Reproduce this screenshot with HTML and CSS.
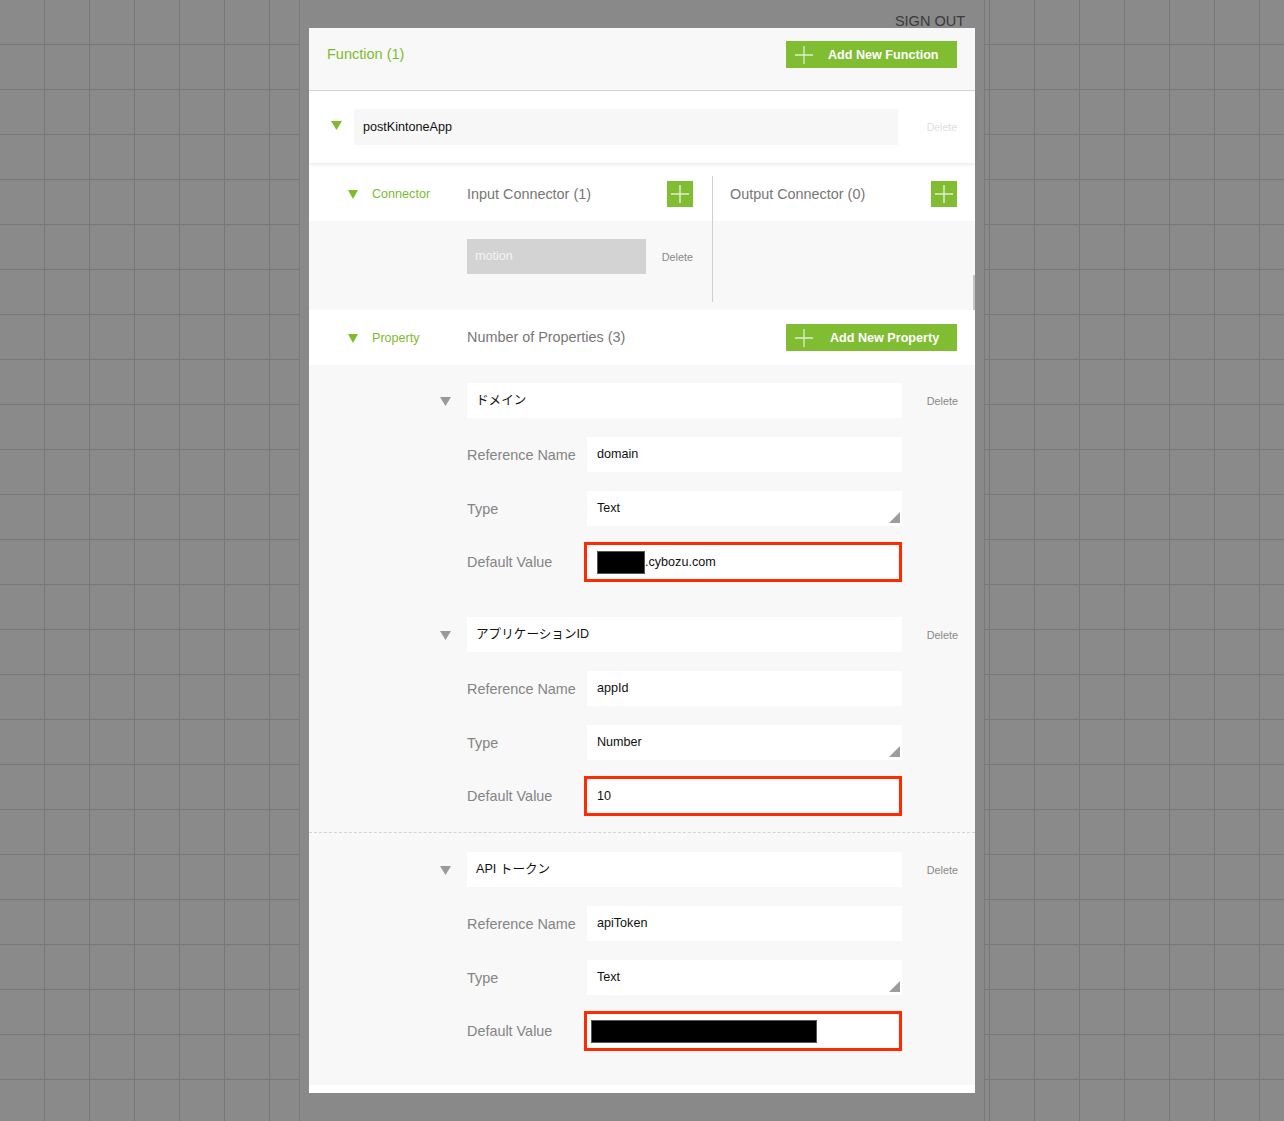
FILE: index.html
```html
<!DOCTYPE html>
<html lang="ja">
<head>
<meta charset="utf-8">
<title>Function</title>
<link rel="stylesheet" href="styles.css">
</head>
<body>
<div class="stage">
  <div class="topbar"><span class="signout">SIGN OUT</span></div>
  <div class="modal">
    <div class="fn-header">
      <div class="fn-title">Function (1)</div>
      <button class="add-btn"><svg class="plus" width="18" height="18" viewBox="0 0 18 18"><path d="M9 0v18M0 9h18" stroke="#fff" stroke-opacity=".75" stroke-width="1.3"/></svg><span>Add New Function</span></button>
    </div>

    <div class="fn-row">
      <svg class="tri" width="11" height="9" viewBox="0 0 11 9"><path d="M0 0h11L5.5 9z" fill="#7dbb2f"/></svg>
      <div class="fn-input">postKintoneApp</div>
      <span class="fn-delete">Delete</span>
    </div>

    <div class="connector">
      <div class="sec-label"><svg class="tri-s" width="10" height="9" viewBox="0 0 10 9"><path d="M0 0h10L5 9z" fill="#7dbb2f"/></svg><span>Connector</span></div>
      <div class="conn-col conn-in">
        <div class="col-head">
          <span class="col-title">Input Connector (1)</span>
          <button class="plus-btn"><svg width="18" height="18" viewBox="0 0 18 18"><path d="M9 0v18M0 9h18" stroke="#fff" stroke-opacity=".75" stroke-width="1.5"/></svg></button>
        </div>
        <div class="col-body">
          <div class="conn-item"><span class="conn-name">motion</span><span class="del">Delete</span></div>
        </div>
      </div>
      <div class="divider"></div>
      <div class="conn-col conn-out">
        <div class="col-head">
          <span class="col-title">Output Connector (0)</span>
          <button class="plus-btn"><svg width="18" height="18" viewBox="0 0 18 18"><path d="M9 0v18M0 9h18" stroke="#fff" stroke-opacity=".75" stroke-width="1.5"/></svg></button>
        </div>
      </div>
      <div class="scroll-thumb"></div>
    </div>

    <div class="prop-head">
      <div class="sec-label"><svg class="tri-s" width="10" height="9" viewBox="0 0 10 9"><path d="M0 0h10L5 9z" fill="#7dbb2f"/></svg><span>Property</span></div>
      <div class="col-title prop-count">Number of Properties (3)</div>
      <button class="add-btn add-prop"><svg class="plus" width="18" height="18" viewBox="0 0 18 18"><path d="M9 0v18M0 9h18" stroke="#fff" stroke-opacity=".75" stroke-width="1.3"/></svg><span>Add New Property</span></button>
    </div>

    <div class="props">
      <div class="prop">
        <div class="prop-name-row">
          <svg class="tri-g" width="11" height="9" viewBox="0 0 11 9"><path d="M0 0h11L5.5 9z" fill="#9a9a9a"/></svg>
          <div class="name-input">ドメイン</div>
          <span class="del">Delete</span>
        </div>
        <div class="field"><span class="label">Reference Name</span><div class="input">domain</div></div>
        <div class="field"><span class="label">Type</span><div class="input select">Text</div></div>
        <div class="field marked"><span class="label">Default Value</span><div class="input"><span class="redact r1"></span>.cybozu.com</div></div>
      </div>

      <div class="prop">
        <div class="prop-name-row">
          <svg class="tri-g" width="11" height="9" viewBox="0 0 11 9"><path d="M0 0h11L5.5 9z" fill="#9a9a9a"/></svg>
          <div class="name-input">アプリケーションID</div>
          <span class="del">Delete</span>
        </div>
        <div class="field"><span class="label">Reference Name</span><div class="input">appId</div></div>
        <div class="field"><span class="label">Type</span><div class="input select">Number</div></div>
        <div class="field marked"><span class="label">Default Value</span><div class="input">10</div></div>
      </div>

      <div class="prop dashed">
        <div class="prop-name-row">
          <svg class="tri-g" width="11" height="9" viewBox="0 0 11 9"><path d="M0 0h11L5.5 9z" fill="#9a9a9a"/></svg>
          <div class="name-input">API トークン</div>
          <span class="del">Delete</span>
        </div>
        <div class="field"><span class="label">Reference Name</span><div class="input">apiToken</div></div>
        <div class="field"><span class="label">Type</span><div class="input select">Text</div></div>
        <div class="field marked"><span class="label">Default Value</span><div class="input"><span class="redact r3"></span></div></div>
      </div>
    </div>
  </div>
</div>
</body>
</html>
```

FILE: styles.css
```css
* { box-sizing: border-box; }

html, body {
  margin: 0;
  padding: 0;
}

body {
  background-color: #8a8a8a;
  background-image:
    linear-gradient(to right, transparent 44px, #777 44px, #777 45px, transparent 45px),
    linear-gradient(to bottom, transparent 44px, #777 44px, #777 45px, transparent 45px);
  background-size: 45px 45px;
  font-family: "Liberation Sans", Arial, "Noto Sans CJK JP", sans-serif;
  min-height: 1121px;
}

.stage {
  width: 686px;
  margin: 0 auto;
  min-height: 1121px;
  background: #898989;
  border-left: 1px solid #7a7a7a;
  border-right: 1px solid #7a7a7a;
  padding: 0 9px;
}

.topbar {
  height: 28px;
  padding-top: 12px;
  text-align: right;
  padding-right: 10px;
}

.signout {
  font-size: 14.5px;
  line-height: 16px;
  color: #3a3a3a;
}

.modal {
  background: #fff;
  padding-bottom: 8px;
}

/* header */
.fn-header {
  height: 63px;
  background: #f8f8f8;
  border-bottom: 1px solid #d2d2d2;
  display: flex;
  justify-content: space-between;
  align-items: flex-start;
  padding: 13px 18px 0 18px;
}

.fn-title {
  color: #7dbb2f;
  font-size: 14.5px;
  line-height: 27px;
}

.add-btn {
  width: 171px;
  height: 27px;
  background: #80bd33;
  border: 0;
  padding: 0 0 0 9px;
  margin: 0;
  display: flex;
  align-items: center;
  font-family: inherit;
  font-weight: bold;
  font-size: 12.6px;
  color: #fff;
  cursor: pointer;
}

.add-btn .plus {
  margin-right: 15px;
  flex: none;
}

.add-prop .plus { margin-right: 17px; }

/* function row */
.fn-row {
  position: relative;
  z-index: 1;
  height: 72px;
  display: flex;
  align-items: flex-start;
  padding: 18px 18px 0 22px;
  background: #fff;
  box-shadow: 0 2px 3px rgba(0, 0, 0, 0.07);
}

.fn-row .tri {
  margin-top: 12px;
  margin-right: 12px;
  flex: none;
}

.fn-input {
  width: 544px;
  height: 36px;
  background: #f7f7f7;
  font-size: 12.6px;
  line-height: 36px;
  padding-left: 9px;
  color: #111;
}

.fn-delete {
  margin-left: auto;
  font-size: 10.5px;
  line-height: 36px;
  color: #dedede;
}

/* connector */
.connector {
  position: relative;
  height: 147px;
  display: flex;
  background: linear-gradient(#fff 58px, #f8f8f8 58px);
}

.sec-label {
  width: 158px;
  flex: none;
  padding-left: 39px;
  display: flex;
  align-items: center;
  height: 58px;
  padding-top: 4px;
  color: #7dbb2f;
  font-size: 12.6px;
}

.sec-label .tri-s {
  margin-right: 14px;
  flex: none;
}

.conn-col {
  display: flex;
  flex-direction: column;
}

.conn-in {
  width: 245px;
  padding-right: 19px;
}

.conn-out {
  flex: 1;
  padding: 0 18px 0 17px;
}

.col-head {
  height: 58px;
  padding-top: 18px;
  display: flex;
  justify-content: space-between;
  align-items: flex-start;
}

.col-title {
  color: #777;
  font-size: 14.4px;
  line-height: 26px;
}

.plus-btn {
  width: 26px;
  height: 26px;
  background: #80bd33;
  border: 0;
  padding: 0;
  margin: 0;
  display: flex;
  align-items: center;
  justify-content: center;
}

.col-body {
  padding-top: 18px;
}

.conn-item {
  display: flex;
  align-items: center;
}

.conn-name {
  width: 180px;
  height: 35px;
  background: #d3d3d3;
  color: #f3f3f3;
  font-size: 12.6px;
  line-height: 35px;
  padding-left: 8px;
  margin-right: 16px;
}

.del {
  font-size: 10.8px;
  color: #888;
}

.divider {
  width: 1px;
  background: #cfcfcf;
  margin: 13px 0 8px;
  flex: none;
}

.scroll-thumb {
  position: absolute;
  right: 0;
  top: 112px;
  width: 2px;
  height: 35px;
  background: #c4c4c4;
}

/* property head */
.prop-head {
  height: 55px;
  display: flex;
  align-items: flex-start;
  padding-right: 18px;
}

.prop-head .sec-label {
  height: 55px;
  padding-top: 1px;
}

.prop-count {
  padding-top: 14px;
  line-height: 27px;
}

.prop-head .add-btn {
  margin-left: auto;
  margin-top: 14px;
}

/* properties */
.props {
  background: #f8f8f8;
  padding-bottom: 18px;
}

.prop {
  padding: 18px 17px 16px 0;
  border-top: 1px solid transparent;
}

.prop:first-child {
  border-top: 0;
}

.prop.dashed {
  border-top: 1px dashed #d4d4d4;
  padding-top: 19px;
}

.prop-name-row {
  display: flex;
  align-items: center;
  padding-left: 131px;
}

.tri-g {
  flex: none;
  margin-right: 16px;
  margin-top: 2px;
}

.name-input {
  width: 435px;
  height: 35px;
  background: #fff;
  font-size: 12.6px;
  line-height: 35px;
  padding-left: 9px;
  color: #111;
}

.prop-name-row .del {
  margin-left: auto;
}

.field {
  display: flex;
  align-items: center;
  padding-left: 158px;
  margin-top: 19px;
}

.label {
  width: 120px;
  flex: none;
  color: #848484;
  font-size: 14.4px;
}

.input {
  position: relative;
  width: 315px;
  height: 35px;
  background: #fff;
  font-size: 12.6px;
  line-height: 35px;
  padding-left: 10px;
  color: #111;
  display: flex;
  align-items: center;
}

.input.select::after {
  content: "";
  position: absolute;
  right: 2px;
  bottom: 3px;
  width: 0;
  height: 0;
  border-left: 11px solid transparent;
  border-bottom: 11px solid #9d9d9d;
}

.field.marked {
  margin-top: 16px;
}

.field.marked .input {
  height: 40px;
  width: 318px;
  margin-left: -3px;
  border: 3px solid #ff2a00;
  padding-left: 10px;
}

.redact {
  display: inline-block;
  background: #000;
  border: 1px solid #555;
}

.redact.r1 {
  width: 48px;
  height: 23px;
}

.redact.r3 {
  width: 226px;
  height: 23px;
  margin-left: -6px;
}
```
